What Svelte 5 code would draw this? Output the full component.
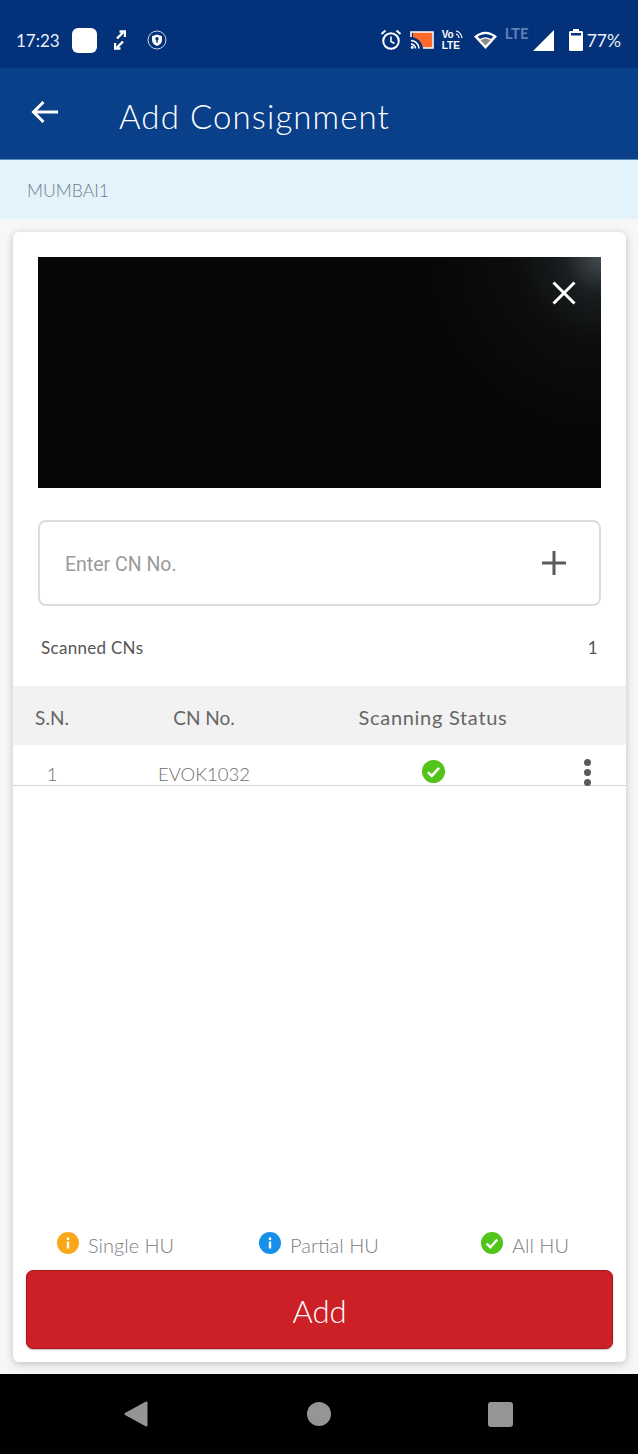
<script>
  const legend = [
    { label: 'Single HU', color: '#faa61a', icon: 'info' },
    { label: 'Partial HU', color: '#1690e8', icon: 'info' },
    { label: 'All HU', color: '#52c41a', icon: 'check' }
  ];
  const rows = [{ sn: 1, cn: 'EVOK1032' }];
</script>

{#snippet badge(color, icon, size)}
  <svg width={size} height={size} viewBox="0 0 24 24">
    <circle cx="12" cy="12" r="12" fill={color} />
    {#if icon === 'check'}
      <path d="M6.200 12.600l4 4 7.600-8.400" fill="none" stroke="#fff" stroke-width="2.600" />
    {:else}
      <rect x="10.700" y="10.400" width="2.600" height="7.600" fill="#fff" />
      <rect x="10.700" y="6" width="2.600" height="2.800" fill="#fff" />
    {/if}
  </svg>
{/snippet}

<div class="screen">
  <div class="status">
    <div class="status-left">
      <span class="time">17:23</span>
      <span class="app-square"></span>
      <svg class="sync" width="12" height="20" viewBox="0 0 12 20">
        <path d="M3 8.500L9 2.500M5.500 1.500h5.500v5.500M9 11.500L3 17.500M6.500 18.500H1v-5.500" fill="none" stroke="#fff" stroke-width="2.400" />
      </svg>
      <svg class="shield" width="20" height="20" viewBox="0 0 20 20">
        <circle cx="10" cy="10" r="9" fill="none" stroke="#c9d6ea" stroke-width="1" />
        <path d="M10 4.500l5 1.700v3.800c0 3-2.200 5-5 6-2.800-1-5-3-5-6V6.200z" fill="#fff" />
        <circle cx="10" cy="8.800" r="1.700" fill="#03317a" />
        <rect x="9.300" y="9.500" width="1.400" height="3.300" fill="#03317a" />
      </svg>
    </div>
    <div class="status-right">
      <svg width="22" height="22" viewBox="0 0 22 22">
        <circle cx="11" cy="12" r="7.800" fill="none" stroke="#fff" stroke-width="2" />
        <path d="M11 7.500V12.500L14.500 14.500" fill="none" stroke="#fff" stroke-width="1.600" />
        <path d="M1.500 5L5.500 1.500M20.500 5L16.500 1.500" stroke="#fff" stroke-width="2" />
      </svg>
      <svg class="cast" width="24" height="20" viewBox="0 0 24 20">
        <path d="M3 2h19v16h-9q-1-8-10-11z" fill="#ff6a2b" />
        <path d="M1 7V2h22v16H13" fill="none" stroke="#fff" stroke-width="1.600" />
        <path d="M1 10.500q7 .5 8 8M1 14q4 .5 4.500 4.500" fill="none" stroke="#fff" stroke-width="1.600" />
        <circle cx="2.200" cy="17.500" r="1.400" fill="#fff" />
      </svg>
      <div class="volte">
        <div class="vo">
          <span>Vo</span>
          <svg width="8" height="9" viewBox="0 0 8 9">
            <path d="M1 1q5 1 6 7M1 4q2.500.5 3 4" fill="none" stroke="#fff" stroke-width="1.200" />
          </svg>
        </div>
        <span>LTE</span>
      </div>
      <svg class="wifi" width="25" height="20" viewBox="0 0 24 20">
        <path d="M12 19L0.500 6.500Q12-3 23.500 6.500z" fill="#fff" />
        <path d="M12 15.500L7 10.300q5-3.600 10 0z" fill="#8c8c8c" />
        <path d="M4.200 6.500q7.800-5 15.600 0l-2.300 2.500q-5.500-3.500-11 0z" fill="#03317a" />
      </svg>
      <span class="lte">LTE</span>
      <svg class="signal" width="22" height="21" viewBox="0 0 22 21"><path d="M0 21L21 0v21z" fill="#fff" /></svg>
      <svg class="battery" width="14" height="22" viewBox="0 0 14 22">
        <path d="M4 0h6v2h2.500a1.500 1.500 0 0 1 1.500 1.500v17a1.500 1.500 0 0 1-1.500 1.500h-11A1.500 1.500 0 0 1 0 20.500v-17A1.500 1.500 0 0 1 1.500 2H4z" fill="#fff" />
        <rect x="2" y="4" width="10" height="2.500" fill="#03317a" />
      </svg>
      <span class="pct">77%</span>
    </div>
  </div>

  <header class="topbar">
    <svg width="30" height="26" viewBox="0 0 30 26">
      <path d="M28 13H4M13.500 3L3.500 13l10 10" fill="none" stroke="#fff" stroke-width="3" />
    </svg>
    <h1>Add Consignment</h1>
  </header>

  <div class="branch">MUMBAI1</div>

  <main class="page">
    <section class="card">
      <div class="camera">
        <svg class="close" width="24" height="24" viewBox="0 0 24 24">
          <path d="M1.500 1.500l21 21M22.500 1.500l-21 21" stroke="#fff" stroke-width="3" />
        </svg>
      </div>

      <div class="cn-input">
        <span class="placeholder">Enter CN No.</span>
        <svg width="26" height="26" viewBox="0 0 26 26">
          <path d="M13 1v24M1 13h24" stroke="#5a5a5a" stroke-width="3" />
        </svg>
      </div>

      <div class="scanned">
        <span>Scanned CNs</span>
        <span>1</span>
      </div>

      <div class="table-head">
        <span class="c-sn">S.N.</span>
        <span class="c-cn">CN No.</span>
        <span class="c-status">Scanning Status</span>
      </div>
      {#each rows as row}
        <div class="table-row">
          <span class="c-sn num">{row.sn}</span>
          <span class="c-cn">{row.cn}</span>
          <span class="c-status ok">{@render badge('#52c41a', 'check', 23)}</span>
          <span class="dots"><i></i><i></i><i></i></span>
        </div>
      {/each}

      <div class="legend">
        {#each legend as item}
          <div class="legend-item">
            {@render badge(item.color, item.icon, 22)}
            <span>{item.label}</span>
          </div>
        {/each}
      </div>

      <button class="add">Add</button>
    </section>
  </main>

  <nav class="softkeys">
    <svg width="24" height="26" viewBox="0 0 24 26"><path d="M22.500 1.500V24.500L1.500 13z" fill="#959595" stroke="#959595" stroke-width="2" stroke-linejoin="round" /></svg>
    <span class="home"></span>
    <span class="recent"></span>
  </nav>
</div>

<style>
  :global(body) {
    margin: 0;
    background: #fff;
  }

  .screen {
    width: 638px;
    height: 1454px;
    display: flex;
    flex-direction: column;
    font-family: Lato, "Open Sans", sans-serif;
  }

  .status {
    height: 68px;
    background: #03317a;
    color: #fff;
    display: flex;
    justify-content: space-between;
    align-items: center;
    padding: 12px 17px 0 16px;
    box-sizing: border-box;
  }

  .status-left,
  .status-right {
    display: flex;
    align-items: center;
  }

  .time {
    font-size: 17px;
    width: 56px;
    color: #e8eef7;
  }

  .app-square {
    width: 25px;
    height: 25px;
    background: #fff;
    border-radius: 6px;
    margin-right: 17px;
  }

  .shield {
    margin-left: 21px;
  }

  .status-right svg {
    flex: none;
  }

  .cast {
    margin-left: 8px;
  }

  .volte {
    margin-left: 8px;
    width: 23px;
    font-size: 10px;
    line-height: 11px;
    font-weight: 700;
    display: flex;
    flex-direction: column;
    font-family: "Liberation Sans", sans-serif;
  }

  .vo {
    display: flex;
    gap: 1px;
    align-items: center;
  }

  .wifi {
    margin-left: 8px;
  }

  .lte {
    font-size: 15px;
    color: #5f80b3;
    margin: -14px 0 0 7px;
    font-weight: 700;
    width: 25px;
  }

  .signal {
    margin-left: 3px;
  }

  .battery {
    margin-left: 14px;
  }

  .pct {
    font-size: 17.500px;
    margin-left: 4px;
    color: #e8eef7;
  }

  .topbar {
    height: 92px;
    background: #0a3f8a;
    display: flex;
    align-items: center;
    padding: 0 0 4px 30px;
    box-sizing: border-box;
    color: #fff;
    border-bottom: 1px solid #5d8fb8;
  }

  .topbar h1 {
    margin: 9px 0 0 59px;
    font-size: 33px;
    font-weight: 300;
    letter-spacing: 1.100px;
  }

  .branch {
    height: 59px;
    background: #e3f3fc;
    color: #6f7c89;
    font-size: 17.600px;
    font-weight: 300;
    display: flex;
    align-items: center;
    padding: 1px 0 0 27px;
    box-sizing: border-box;
  }

  .page {
    flex: 1;
    background: #f7f7f7;
    padding: 13px 12px 12px 13px;
    display: flex;
    min-height: 0;
  }

  .card {
    flex: 1;
    background: #fff;
    border-radius: 6px;
    box-shadow: 0 2px 8px rgba(0, 0, 0, 0.22);
    display: flex;
    flex-direction: column;
  }

  .camera {
    height: 231px;
    margin: 25px 25px 0;
    background:
      radial-gradient(circle at 100% 0, #454d50 0, #1a1e20 6%, #0c0d0d 14%, transparent 30%),
      #070606;
    position: relative;
  }

  .close {
    position: absolute;
    top: 24px;
    right: 25px;
  }

  .cn-input {
    height: 86px;
    margin: 32px 25px 0;
    border: 2px solid #dcdcdc;
    border-radius: 8px;
    box-sizing: border-box;
    display: flex;
    justify-content: space-between;
    align-items: center;
    padding: 0 32px 0 25px;
  }

  .placeholder {
    font-family: Roboto, sans-serif;
    font-size: 19.500px;
    color: #9a9a9a;
    padding-top: 2px;
  }

  .scanned {
    display: flex;
    justify-content: space-between;
    font-size: 17px;
    letter-spacing: 0.3px;
    color: #555;
    margin: 31px 28px 0;
    height: 49px;
  }

  .table-head,
  .table-row {
    display: grid;
    grid-template-columns: 78px 226px 232px 1fr;
    align-items: center;
    text-align: center;
  }

  .table-head {
    height: 59px;
    background: #f2f2f2;
    color: #666;
    font-size: 19px;
    padding-top: 3px;
    box-sizing: border-box;
  }

  .table-head .c-status {
    font-size: 20px;
    letter-spacing: 0.7px;
  }

  .table-row {
    height: 41px;
    box-sizing: border-box;
    border-bottom: 1px solid #d6d6d6;
    color: #6e6e6e;
    font-size: 18.500px;
    font-weight: 300;
  }

  .table-row > span {
    height: 40px;
    display: flex;
    align-items: center;
    justify-content: center;
    padding-top: 17px;
    box-sizing: border-box;
  }

  .table-row .ok {
    padding-top: 12px;
  }

  .table-row .dots {
    flex-direction: column;
    gap: 3px;
    padding: 14px 0 0 0;
  }

  .dots i {
    width: 7px;
    height: 7px;
    border-radius: 50%;
    background: #5a5a5a;
    flex: none;
  }

  .legend {
    margin-top: auto;
    display: grid;
    grid-template-columns: 202px 222px 1fr;
    padding-left: 44px;
    font-size: 20px;
    font-weight: 300;
    color: #808080;
  }

  .legend-item {
    display: flex;
    align-items: center;
    gap: 9px;
  }

  .legend-item svg {
    margin-top: -4px;
  }

  .add {
    margin: 13px 13px 13px;
    height: 79px;
    background: #cc2026;
    border: 1px solid #a81519;
    border-radius: 7px;
    box-shadow: 0 1px 2px rgba(0, 0, 0, 0.25);
    color: #fff;
    font-family: inherit;
    font-size: 31px;
    font-weight: 300;
    padding: 3px 0 0;
  }

  .softkeys {
    height: 80px;
    background: #000;
    display: flex;
    align-items: center;
    padding: 0 125px 0 124px;
    justify-content: space-between;
  }

  .home {
    width: 24px;
    height: 24px;
    border-radius: 50%;
    background: #959595;
    margin-left: 2px;
  }

  .recent {
    width: 25px;
    height: 25px;
    border-radius: 3px;
    background: #959595;
  }
</style>
